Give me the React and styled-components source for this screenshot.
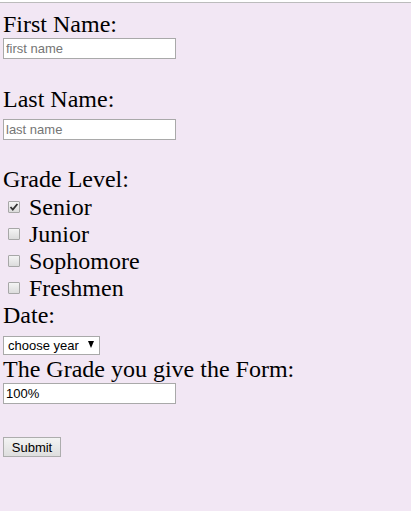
import React from "react";
import styled, { createGlobalStyle } from "styled-components";

const Global = createGlobalStyle`
  html, body { margin: 0; padding: 0; background: #ffffff; }
  body { font-family: "Liberation Serif", "Times New Roman", serif; }
`;

const Page = styled.form`
  margin-top: 2px;
  border-top: 1px solid #bcbcbc;
  background: #f2e7f4;
  min-height: calc(100vh - 3px);
  padding: 7px 0 0 3px;
  box-sizing: border-box;
  display: flex;
  flex-direction: column;
  align-items: flex-start;
  color: #000;
`;

const Label = styled.label`
  display: block;
  box-sizing: border-box;
  font-family: "Liberation Serif", "Times New Roman", serif;
  font-size: 24px;
  line-height: 26px;
  height: 27px;
  padding-top: 1px;
  margin-top: ${(p) => p.$top || 0}px;
  white-space: nowrap;
`;

const TextInput = styled.input`
  box-sizing: border-box;
  width: 173px;
  height: 21px;
  margin: ${(p) => p.$top || 0}px 0 0 0;
  padding: 1px 2px;
  border: 1px solid #a9a9a9;
  background: #ffffff;
  font-family: "Liberation Sans", Arial, sans-serif;
  font-size: 13px;
  color: #000;
  outline: none;
  &::placeholder { color: #757575; opacity: 1; }
`;

const CheckGroup = styled.div`
  display: flex;
  flex-direction: column;
  margin-top: 1px;
`;

const CheckRow = styled.label`
  display: flex;
  align-items: center;
  box-sizing: border-box;
  height: 27px;
  padding-top: 1px;
  font-family: "Liberation Serif", "Times New Roman", serif;
  font-size: 24px;
  line-height: 26px;
  white-space: nowrap;
`;

const Box = styled.span`
  box-sizing: border-box;
  width: 12px;
  height: 12px;
  margin: 0 9px 0 5px;
  border: 1px solid #a7a7a7;
  border-radius: 1px;
  background: linear-gradient(#f4f4f4, #dcdcdc);
  display: flex;
  align-items: center;
  justify-content: center;
`;

const Tick = () => (
  <svg width="10" height="10" viewBox="0 0 10 10">
    <path d="M1.5 5 L3.8 7.6 L8.4 2" fill="none" stroke="#333" strokeWidth="1.8" />
  </svg>
);

const SelectWrap = styled.span`
  position: relative;
  display: inline-block;
  margin-top: 8px;
`;

const Select = styled.select`
  appearance: none;
  -webkit-appearance: none;
  box-sizing: border-box;
  width: 97px;
  height: 19px;
  padding: 0 0 0 4px;
  border: 1px solid #a9a9a9;
  border-radius: 0;
  background: #ffffff;
  font-family: "Liberation Sans", Arial, sans-serif;
  font-size: 13px;
  color: #000;
  outline: none;
`;

const Arrow = styled.span`
  position: absolute;
  right: 6px;
  top: 5px;
  width: 0;
  height: 0;
  border-left: 3.5px solid transparent;
  border-right: 3.5px solid transparent;
  border-top: 7px solid #000;
  pointer-events: none;
`;

const Button = styled.button`
  box-sizing: border-box;
  margin-top: 33px;
  width: 58px;
  height: 20px;
  padding: 0;
  border: 1px solid #adadad;
  border-radius: 0;
  background: linear-gradient(#f3f3f3, #dedede);
  font-family: "Liberation Sans", Arial, sans-serif;
  font-size: 13px;
  color: #000;
`;

const grades = [
  { name: "Senior", checked: true },
  { name: "Junior" },
  { name: "Sophomore" },
  { name: "Freshmen" },
];

export default function App() {
  return (
    <>
      <Global />
      <Page onSubmit={(e) => e.preventDefault()}>
        <Label>First Name:</Label>
        <TextInput $top={1} placeholder="first name" />
        <Label $top={26}>Last Name:</Label>
        <TextInput $top={7} placeholder="last name" />
        <Label $top={25}>Grade Level:</Label>
        <CheckGroup>
          {grades.map((g) => (
            <CheckRow key={g.name}>
              <Box>{g.checked && <Tick />}</Box>
              {g.name}
            </CheckRow>
          ))}
        </CheckGroup>
        <Label>Date:</Label>
        <SelectWrap>
          <Select defaultValue="">
            <option value="">choose year</option>
            <option>2017</option>
            <option>2018</option>
          </Select>
          <Arrow />
        </SelectWrap>
        <Label>The Grade you give the Form:</Label>
        <TextInput $top={1} defaultValue="100%" />
        <Button type="submit">Submit</Button>
      </Page>
    </>
  );
}
